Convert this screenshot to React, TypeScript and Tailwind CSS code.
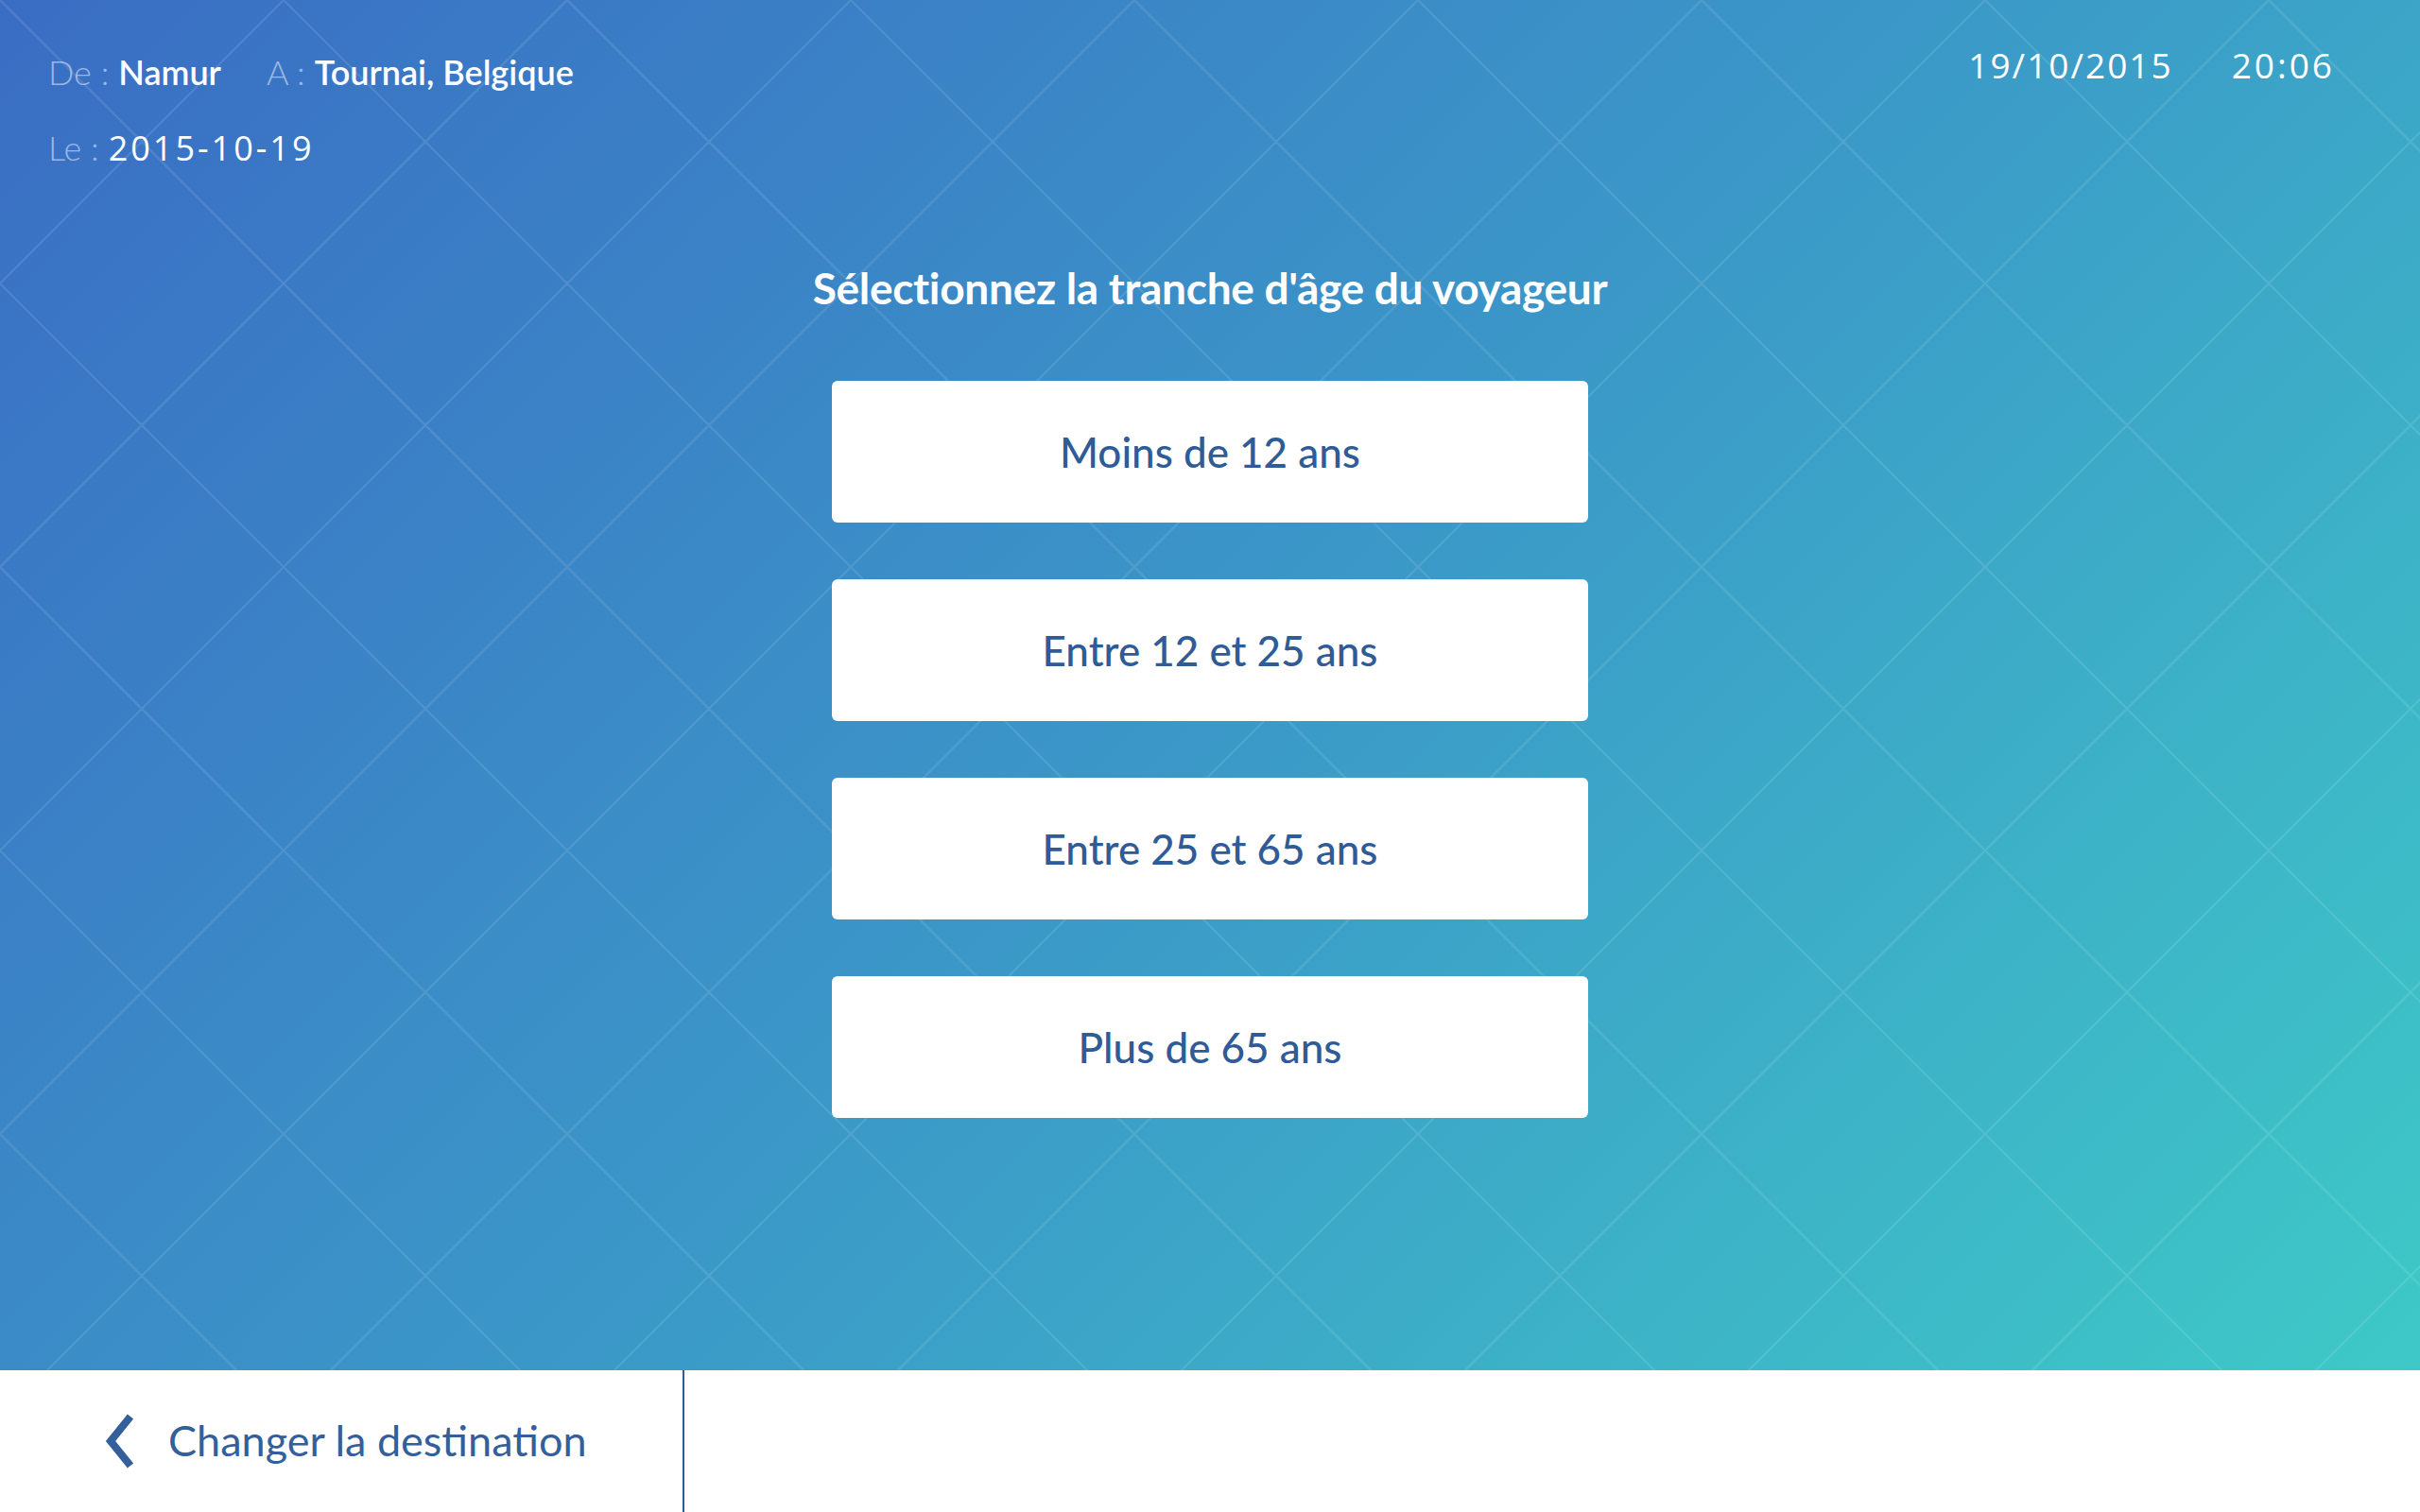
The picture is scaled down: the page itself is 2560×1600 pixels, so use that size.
import React from 'react';

const AGE_OPTIONS = ['Moins de 12 ans', 'Entre 12 et 25 ans', 'Entre 25 et 65 ans', 'Plus de 65 ans'];

const DiamondPattern: React.FC = () => (
  <svg className="absolute inset-0 w-full h-full pointer-events-none" aria-hidden="true">
    <defs>
      <pattern id="diamonds" width="300" height="300" patternUnits="userSpaceOnUse">
        <path d="M0 0 L300 300 M300 0 L0 300" stroke="#ffffff" strokeOpacity="0.11" strokeWidth="2" fill="none" />
      </pattern>
    </defs>
    <rect width="100%" height="100%" fill="url(#diamonds)" />
  </svg>
);

const App: React.FC = () => {
  return (
    <div className="h-screen w-full flex flex-col font-['Lato',sans-serif]">
      <main className="relative flex-1 overflow-hidden bg-[linear-gradient(135deg,#3a6dc4_0%,#3b97c8_50%,#3ec9c7_100%)]">
        <DiamondPattern />

        <div className="relative flex flex-col h-full">
          {/* header */}
          <header className="flex justify-between pl-[51px] pr-[90px] pt-[56px]">
            <div className="flex flex-col gap-[40px]">
              <div className="flex items-baseline text-[36px] leading-[40px] text-white">
                <span className="font-light text-white/50">De :</span>
                <span className="ml-[10px] font-semibold">Namur</span>
                <span className="ml-[48px] font-light text-white/50">A :</span>
                <span className="ml-[10px] font-semibold">Tournai, Belgique</span>
              </div>
              <div className="flex items-baseline text-[36px] leading-[40px] text-white">
                <span className="font-light text-white/50">Le :</span>
                <span className="ml-[10px] font-['Open_Sans',sans-serif] text-[36px] tracking-[3px]">2015-10-19</span>
              </div>
            </div>
            <div className="flex items-baseline gap-[62px] font-['Open_Sans',sans-serif] text-[37px] leading-[40px] tracking-[2px] text-white -mt-[7px]">
              <span>19/10/2015</span>
              <span className="tracking-[3px]">20:06</span>
            </div>
          </header>

          {/* content */}
          <section className="flex flex-col items-center mt-[102px]">
            <h1 className="text-[46px] leading-[52px] font-bold text-white tracking-[-0.3px]">
              Sélectionnez la tranche d'âge du voyageur
            </h1>
            <div className="flex flex-col gap-[60px] mt-[72px]">
              {AGE_OPTIONS.map(opt => (
                <button
                  key={opt}
                  type="button"
                  className="w-[800px] h-[150px] rounded-[6px] bg-white flex items-center justify-center text-[44px] font-medium text-[#2f5b97]"
                >
                  {opt}
                </button>
              ))}
            </div>
          </section>
        </div>
      </main>

      {/* bottom bar */}
      <footer className="h-[150px] bg-white flex">
        <div className="w-[724px] border-r-2 border-[#2f5b97] flex items-center pl-[108px]">
          <svg width="36" height="58" viewBox="0 0 36 58" fill="none" aria-hidden="true">
            <path d="M30 3 L9 29 L30 55" stroke="#33609a" strokeWidth="8" strokeLinejoin="miter" />
          </svg>
          <span className="ml-[34px] text-[45px] text-[#33609a]">Changer la destination</span>
        </div>
      </footer>
    </div>
  );
};

export default App;
